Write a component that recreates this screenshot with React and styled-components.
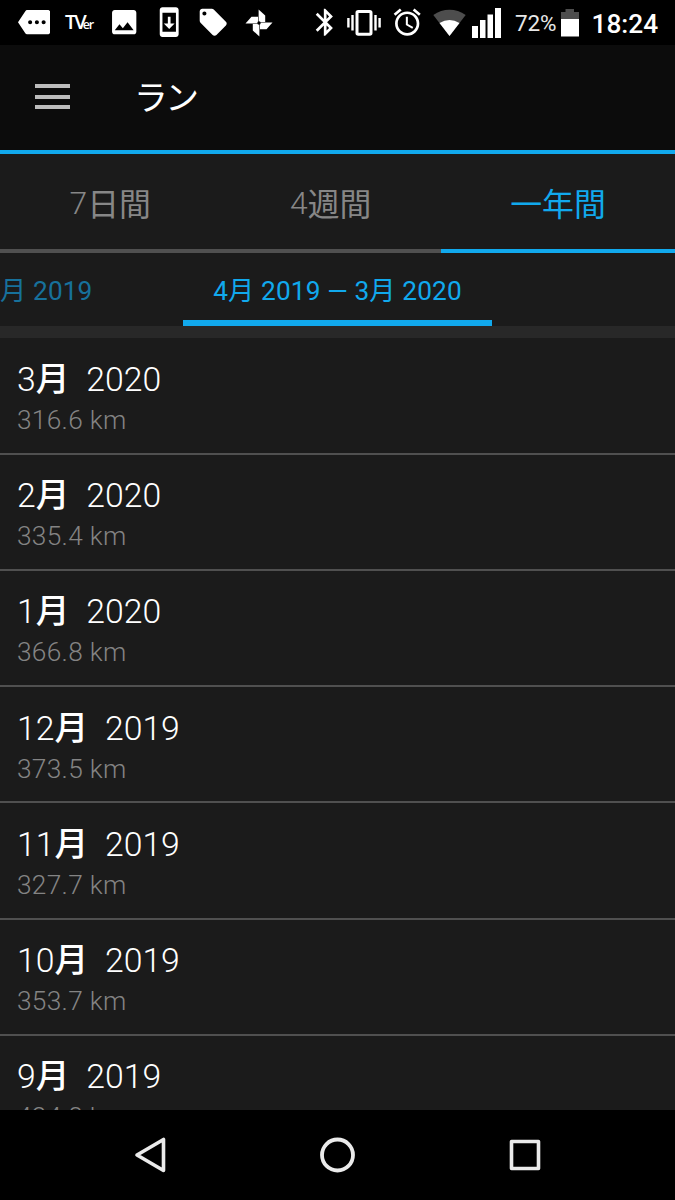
import React from "react";
import styled, { createGlobalStyle } from "styled-components";
import { MdMore, MdImage, MdSystemUpdate, MdLocalOffer, MdBluetooth, MdAccessAlarm } from "react-icons/md";

const GlobalStyle = createGlobalStyle`
  * { box-sizing: border-box; }
  body {
    margin: 0;
    background: #000;
    font-family: Roboto, "Noto Sans CJK JP", sans-serif;
  }
`;

const Screen = styled.div`
  width: 675px;
  height: 1200px;
  display: flex;
  flex-direction: column;
  overflow: hidden;
  background: #1b1b1b;
`;

const StatusBar = styled.div`
  height: 45px;
  flex: none;
  display: flex;
  align-items: center;
  background: #000;
  color: #fff;
  white-space: nowrap;
`;

const StatusSlot = styled.span`
  flex: none;
  display: flex;
  align-items: center;
  width: ${(p) => p.$w}px;
  height: 45px;
  margin-left: ${(p) => p.$gap || 0}px;
  svg { flex: none; display: block; }
`;

const BrandMark = styled.span`
  display: flex;
  align-items: baseline;
  padding-top: 2px;
  font-family: "Open Sans", sans-serif;
  font-weight: 600;
  line-height: 24px;
`;

const BrandCaps = styled.span`
  font-size: 20px;
  letter-spacing: -2px;
`;

const BrandSmall = styled.span`
  font-size: 12.5px;
  letter-spacing: -1.2px;
  margin-left: -2px;
`;

const BatteryText = styled.span`
  flex: none;
  width: 46px;
  margin-left: 14px;
  padding-top: 1px;
  font-size: 22.5px;
  letter-spacing: -0.2px;
  color: #e8e8e8;
`;

const Clock = styled.span`
  margin-left: 12.5px;
  padding-top: 2px;
  font-size: 26.25px;
  font-weight: 500;
`;

const AppBar = styled.header`
  height: 109px;
  flex: none;
  display: flex;
  align-items: center;
  padding-left: 35px;
  background: #0c0c0c;
  border-bottom: 4px solid #11a9ed;
`;

const MenuIcon = styled.span`
  width: 35px;
  height: 25px;
  display: flex;
  flex-direction: column;
  justify-content: space-between;
  margin-bottom: 2px;
`;

const MenuLine = styled.i`
  height: 4px;
  background: #bdbdbd;
`;

const Title = styled.h1`
  margin: 3px 0 0 64px;
  font-size: 33.75px;
  font-weight: 400;
  line-height: 40px;
  letter-spacing: -2.6px;
  color: #fff;
`;

const Tabs = styled.nav`
  height: 99px;
  flex: none;
  display: grid;
  grid-template-columns: 220.5px 220.5px 1fr;
`;

const Tab = styled.div`
  display: flex;
  align-items: center;
  justify-content: center;
  padding-top: 3px;
  font-size: 31.875px;
  font-weight: 300;
  color: ${(p) => (p.$active ? "#11a9ed" : "#878787")};
  border-bottom: 4px solid ${(p) => (p.$active ? "#11a9ed" : "#505050")};
`;

const Kanji = styled.span`
  font-family: "Noto Sans CJK JP", sans-serif;
  font-weight: ${(p) => p.$weight || 400};
  line-height: 1;
`;

const PeriodBar = styled.div`
  height: 85px;
  flex: none;
  display: flex;
  border-bottom: 12px solid #282828;
  font-size: 26.25px;
  line-height: 30px;
  letter-spacing: 0.12px;
  white-space: pre;
`;

const PreviousPeriod = styled.div`
  width: 183px;
  display: flex;
  justify-content: flex-end;
  padding: 23px 90.5px 0 0;
  overflow: hidden;
  color: #17719b;
`;

const CurrentPeriod = styled.div`
  width: 309px;
  text-align: center;
  padding-top: 23px;
  color: #11a9ed;
  border-bottom: 6px solid #11a9ed;
`;

const List = styled.main`
  flex: 1;
  min-height: 0;
  overflow: hidden;
  padding-top: 0.4px;
`;

const Row = styled.section`
  height: 116.25px;
  padding: 20.4px 17px 0;
  border-bottom: 2px solid #505050;
  font-weight: 300;
`;

const Month = styled.div`
  height: 41px;
  font-size: 33.75px;
  line-height: 41px;
  color: #fff;
  white-space: pre;
`;

const Year = styled.span`
  margin-left: 0.3px;
`;

const Distance = styled.div`
  height: 40px;
  font-size: 26.25px;
  line-height: 40px;
  letter-spacing: 0.3px;
  color: #848484;
`;

const NavBar = styled.footer`
  height: 90px;
  flex: none;
  display: flex;
  align-items: center;
  justify-content: center;
  gap: 151.5px;
  background: #000;
  svg { display: block; }
`;

const months = [
  ["3", "2020", "316.6"],
  ["2", "2020", "335.4"],
  ["1", "2020", "366.8"],
  ["12", "2019", "373.5"],
  ["11", "2019", "327.7"],
  ["10", "2019", "353.7"],
  ["9", "2019", "424.8"],
];

const Pinwheel = () => (
  <svg width="28" height="28" viewBox="0 0 28 28" fill="#fff">
    {[0, 90, 180, 270].map((a) => (
      <path key={a} transform={`rotate(${a} 14 14)`} d="M13.6 .5L20.2 6.5V13H13.6Z" />
    ))}
    <circle cx="14" cy="14" r="1.7" fill="#000" />
  </svg>
);

const Vibrate = () => (
  <svg width="34" height="28" viewBox="0 0 34 28" fill="none" stroke="#fff" strokeWidth="3">
    <rect x="10" y="2.5" width="14" height="22.8" rx="1.2" />
    <path d="M1.4 9v9.5M5.5 6v15.5M32.6 9v9.5M28.5 6v15.5" strokeWidth="2.4" />
  </svg>
);

const Wifi = () => (
  <svg width="33" height="28" viewBox="0 0 33 28">
    <path d="M.3 6C10-1 23-1 32.7 6L16.5 27Z" fill="#4d4d4d" />
    <path d="M6.5 14Q16.5 8 26.5 14L16.5 27Z" fill="#fff" />
  </svg>
);

const Signal = () => (
  <svg width="29" height="30" viewBox="0 0 29 30" fill="#fff">
    <path d="M0 18h6v12H0zM8 12h5.5v18H8zM15.5 6.5H21V30h-5.5zM23 0h6v30h-6z" />
  </svg>
);

const Battery = () => (
  <svg width="18" height="28" viewBox="0 0 18 28">
    <path d="M0 3h4.5V0h8.5v3H18v8H0z" fill="#4d4d4d" />
    <path d="M0 10h18v17.5H0z" fill="#fff" />
  </svg>
);

export default function App() {
  return (
    <>
      <GlobalStyle />
      <Screen>
        <StatusBar>
          <StatusSlot $w={32} $gap={18}><MdMore size={32.4} /></StatusSlot>
          <StatusSlot $w={30} $gap={15}>
            <BrandMark><BrandCaps>TV</BrandCaps><BrandSmall>er</BrandSmall></BrandMark>
          </StatusSlot>
          <StatusSlot $w={32} $gap={12.5}><MdImage size={32.4} /></StatusSlot>
          <StatusSlot $w={32} $gap={13}><MdSystemUpdate size={32.4} /></StatusSlot>
          <StatusSlot $w={32} $gap={12.5}><MdLocalOffer size={32.4} /></StatusSlot>
          <StatusSlot $w={28} $gap={15.5}><Pinwheel /></StatusSlot>
          <StatusSlot $w={32} $gap={36.5}><MdBluetooth size={32.4} /></StatusSlot>
          <StatusSlot $w={34} $gap={6}><Vibrate /></StatusSlot>
          <StatusSlot $w={32} $gap={9.5}><MdAccessAlarm size={32.4} /></StatusSlot>
          <StatusSlot $w={33} $gap={10}><Wifi /></StatusSlot>
          <StatusSlot $w={29} $gap={6.5}><Signal /></StatusSlot>
          <BatteryText>72%</BatteryText>
          <StatusSlot $w={18}><Battery /></StatusSlot>
          <Clock>18:24</Clock>
        </StatusBar>
        <AppBar>
          <MenuIcon><MenuLine /><MenuLine /><MenuLine /></MenuIcon>
          <Title>ラン</Title>
        </AppBar>
        <Tabs>
          <Tab>7<Kanji>日間</Kanji></Tab>
          <Tab>4<Kanji>週間</Kanji></Tab>
          <Tab $active><Kanji>一年間</Kanji></Tab>
        </Tabs>
        <PeriodBar>
          <PreviousPeriod><Kanji>月</Kanji> 2019</PreviousPeriod>
          <CurrentPeriod>4<Kanji>月</Kanji> 2019 — 3<Kanji>月</Kanji> 2020</CurrentPeriod>
        </PeriodBar>
        <List>
          {months.map(([month, year, km]) => (
            <Row key={month}>
              <Month>{month}<Kanji $weight={500}>月</Kanji><Year>{"  " + year}</Year></Month>
              <Distance>{km} km</Distance>
            </Row>
          ))}
        </List>
        <NavBar>
          <svg width="36" height="36" viewBox="0 0 36 36" fill="none" stroke="#ebebeb" strokeWidth="3.6" strokeLinejoin="round">
            <path d="M5 18L31.5 2.5v31z" />
          </svg>
          <svg width="36" height="36" viewBox="0 0 36 36" fill="none" stroke="#ebebeb" strokeWidth="3.8">
            <circle cx="17.5" cy="18" r="15.5" />
          </svg>
          <svg width="36" height="36" viewBox="0 0 36 36" fill="none" stroke="#ebebeb" strokeWidth="3.6" strokeLinejoin="round">
            <rect x="4.5" y="4.5" width="27" height="27" />
          </svg>
        </NavBar>
      </Screen>
    </>
  );
}
